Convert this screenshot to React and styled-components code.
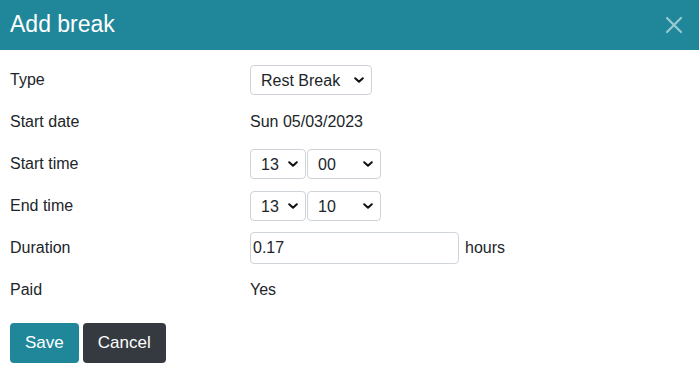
import styled, { createGlobalStyle } from "styled-components";

const GlobalStyle = createGlobalStyle`
  html, body {
    margin: 0;
    padding: 0;
    background: #ffffff;
  }
  body {
    font-family: "Liberation Sans", Arial, sans-serif;
    color: #212529;
  }
`;

const chevron =
  "url(\"data:image/svg+xml,%3Csvg xmlns='http://www.w3.org/2000/svg' viewBox='0 0 10 6'%3E%3Cpath d='M1.2 1.2l3.8 3.6 3.8-3.6' fill='none' stroke='%23111' stroke-width='2' stroke-linecap='round' stroke-linejoin='round'/%3E%3C/svg%3E\")";

const rows = [
  { label: "Type", kind: "type" },
  { label: "Start date", kind: "text", value: "Sun 05/03/2023" },
  { label: "Start time", kind: "time", hour: "13", minute: "00" },
  { label: "End time", kind: "time", hour: "13", minute: "10" },
  { label: "Duration", kind: "duration", value: "0.17" },
  { label: "Paid", kind: "text", value: "Yes" },
];

const renderValue = (row) => {
  if (row.kind === "type") {
    return (
      <Select $width={122} defaultValue="Rest Break">
        <option>Rest Break</option>
        <option>Meal Break</option>
      </Select>
    );
  }
  if (row.kind === "time") {
    return (
      <TimeGroup>
        <Select $width={56} defaultValue={row.hour}>
          <option>{row.hour}</option>
        </Select>
        <Select $width={74} defaultValue={row.minute}>
          <option>{row.minute}</option>
        </Select>
      </TimeGroup>
    );
  }
  if (row.kind === "duration") {
    return (
      <>
        <Input defaultValue={row.value} />
        <Unit>hours</Unit>
      </>
    );
  }
  return <Value>{row.value}</Value>;
};

const App = () => {
  return (
    <>
      <GlobalStyle />
      <Dialog>
        <Header>
          <Title>Add break</Title>
          <CloseButton aria-label="Close">
            <svg width="18" height="18" viewBox="0 0 18 18">
              <path
                d="M2 2L16 16M16 2L2 16"
                stroke="currentColor"
                strokeWidth="2.2"
                strokeLinecap="round"
              />
            </svg>
          </CloseButton>
        </Header>

        <Body>
          {rows.map((row) => (
            <Row key={row.label}>
              <Label>{row.label}</Label>
              <Field>{renderValue(row)}</Field>
            </Row>
          ))}

          <Actions>
            <Button $variant="primary">Save</Button>
            <Button $variant="dark">Cancel</Button>
          </Actions>
        </Body>
      </Dialog>
    </>
  );
};

export default App;

const Dialog = styled.div`
  width: 699px;
  height: 378px;
  background: #ffffff;
  overflow: hidden;
`;

const Header = styled.div`
  height: 50px;
  background: #20879b;
  display: flex;
  align-items: center;
  justify-content: space-between;
  padding: 0 16px 0 10px;
  box-sizing: border-box;
`;

const Title = styled.h1`
  margin: 0;
  font-size: 23px;
  font-weight: 400;
  color: #ffffff;
  line-height: 1;
  padding-bottom: 2px;
`;

const CloseButton = styled.button`
  border: none;
  background: transparent;
  padding: 0;
  display: flex;
  color: rgba(255, 255, 255, 0.55);
  cursor: pointer;
`;

const Body = styled.div`
  padding: 9px 10px 0;
`;

const Row = styled.div`
  display: flex;
  align-items: center;
  height: 42px;
`;

const Label = styled.div`
  width: 240px;
  font-size: 16px;
`;

const Field = styled.div`
  display: flex;
  align-items: center;
  font-size: 16px;
`;

const Value = styled.span`
  font-size: 16px;
`;

const TimeGroup = styled.div`
  display: flex;
  gap: 1px;
`;

const Select = styled.select`
  appearance: none;
  -webkit-appearance: none;
  width: ${({ $width }) => $width}px;
  height: 30px;
  box-sizing: border-box;
  border: 1px solid #ced4da;
  border-radius: 4px;
  background: #ffffff ${chevron} no-repeat right 7px center / 10px 6px;
  padding: 0 20px 0 10px;
  font-family: "Liberation Sans", Arial, sans-serif;
  font-size: 16px;
  color: #212529;
`;

const Input = styled.input`
  width: 209px;
  height: 32px;
  box-sizing: border-box;
  border: 1px solid #ced4da;
  border-radius: 4px;
  padding: 0 2px;
  font-family: "Liberation Sans", Arial, sans-serif;
  font-size: 16px;
  color: #212529;
`;

const Unit = styled.span`
  margin-left: 6px;
  font-size: 16px;
`;

const Actions = styled.div`
  display: flex;
  gap: 4px;
  margin-top: 12px;
`;

const Button = styled.button`
  height: 40px;
  padding: 0 15px;
  border: none;
  border-radius: 4px;
  font-family: "Liberation Sans", Arial, sans-serif;
  font-size: 17px;
  color: #ffffff;
  background: ${({ $variant }) =>
    $variant === "primary" ? "#20879b" : "#343a40"};
  cursor: pointer;
`;
